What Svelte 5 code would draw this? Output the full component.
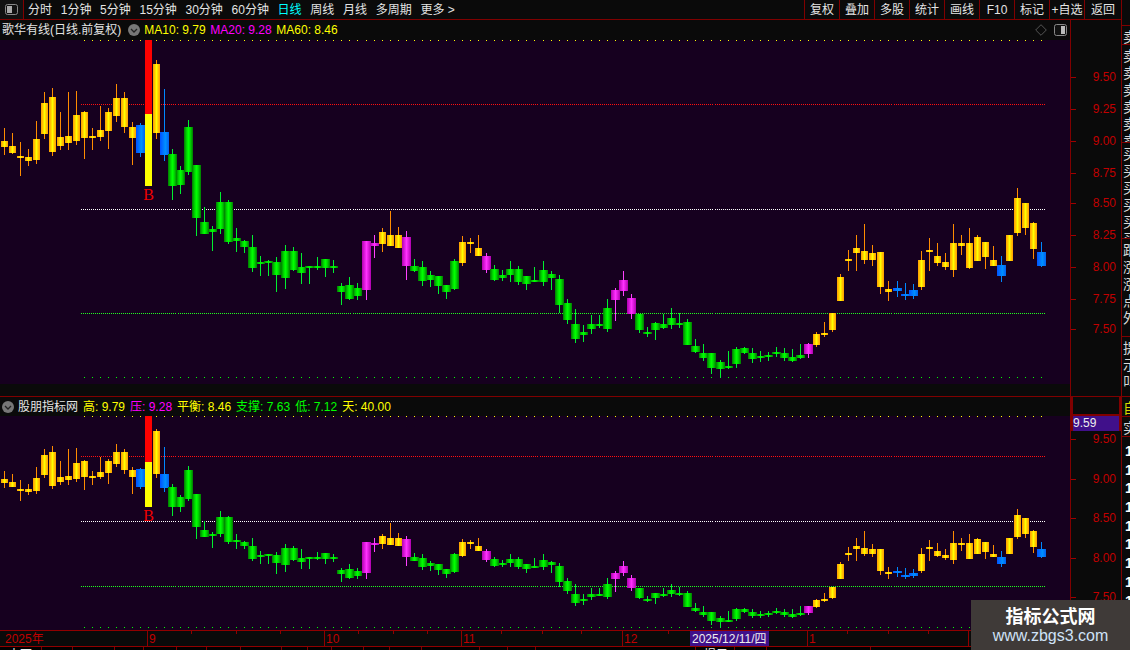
<script>
  const rows = `128,141,147,155 133,146,153,154 142,156,158,176 149,157,161,166 121,139,160,164 92,103,134,139 88,97,152,156 112,137,146,150 92,136,143,150 91,115,141,145 111,112,138,159 128,136,138,150 106,130,137,141 108,112,131,149 84,98,116,122 92,98,127,133 122,127,138,165 123,125,153,157 40,40,186,186 60,64,133,139 89,132,155,161 149,154,186,200 166,170,185,194 120,127,172,175 165,165,218,236 207,222,234,234 226,229,232,251 192,202,229,234 200,202,242,244 228,238,241,252 240,241,247,253 235,247,268,272 256,262,263,276 260,261,263,276 257,262,275,292 245,251,278,289 247,251,270,271 253,267,273,284 266,266,268,284 257,266,268,270 259,259,268,277 260,266,268,273 283,286,292,305 277,285,299,300 283,288,296,300 241,241,290,300 235,243,246,258 228,232,244,252 211,235,246,246 227,235,248,248 231,237,266,280 259,266,271,272 261,267,281,286 271,275,280,287 276,276,286,294 285,285,292,299 259,261,289,290 236,242,263,266 238,242,244,253 235,248,256,256 253,256,270,273 265,269,280,281 270,275,278,281 261,269,275,282 266,269,282,285 276,276,284,290 267,280,282,282 261,270,282,286 271,274,278,290 275,279,305,313 299,303,320,324 309,324,339,343 325,332,335,342 315,324,329,334 315,324,325,328 299,308,329,332 288,290,300,321 271,280,291,296 294,298,314,319 314,314,330,333 327,332,333,337 322,323,330,340 314,324,328,329 308,318,325,329 313,323,324,328 319,322,345,345 339,346,352,353 344,353,358,361 353,353,368,374 360,362,369,378 351,366,367,369 347,349,364,368 347,348,353,354 348,353,359,363 351,356,357,362 352,355,357,361 347,352,354,357 348,353,358,361 349,357,361,362 344,355,358,359 343,344,354,358 332,334,345,347 322,333,335,337 313,313,330,332 274,277,301,301 250,259,261,271 235,248,253,271 224,251,260,264 245,253,260,266 252,252,287,294 281,289,292,301 281,288,291,297 283,294,296,300 284,290,296,299 251,260,287,290 238,250,252,271 243,256,263,266 253,262,267,270 224,243,270,277 235,243,246,255 228,243,268,269 235,237,261,261 242,242,257,269 246,260,266,266 256,265,276,282 235,235,261,261 188,198,233,236 203,203,228,235 222,223,249,259 242,252,266,267`
    .split(' ').map((r) => r.split(',').map(Number));

  function kind(i) {
    if (i <= 16 || i === 19 || (i >= 47 && i <= 49) || (i >= 57 && i <= 59) || (i >= 101 && i <= 110) || (i >= 114 && i <= 123) || (i >= 125 && i <= 128)) return 'y';
    if (i === 17 || i === 20 || (i >= 111 && i <= 113) || i === 124 || i === 129) return 'b';
    if (i === 45 || i === 46 || i === 50 || i === 60 || (i >= 76 && i <= 78) || i === 100) return 'm';
    return 'g';
  }
  function xOf(i) {
    const off = i < 35 ? 4 : i < 45 ? 5 : i < 67 ? 6 : i < 89 ? 7 : i < 111 ? 8 : 9;
    return 8 * i + off;
  }
  const wick = { y: '#ff8c00', g: '#00f030', b: '#0088ff', m: '#ff40ff' };
  const candles = rows.map((r, i) => ({ i, r, k: kind(i), x: xOf(i) })).filter((c) => c.i !== 18);
  const dots = rows.map((_, i) => xOf(i)).filter((x) => x >= 84);
  const segs = [[81, 176], [178, 351], [353, 538], [540, 714], [715, 892], [894, 1046]];

  const top = (y) => y;
  const low = (y) => Math.round(416 + (y - 40) * 0.626);

  const topTicks = [['9.50', 77], ['9.25', 109], ['9.00', 141], ['8.75', 173], ['8.50', 203], ['8.25', 235], ['8.00', 267], ['7.75', 299], ['7.50', 329]];
  const lowTicks = [['9.50', 9], ['9.00', 49], ['8.50', 88], ['8.00', 128], ['7.50', 167]];

  const periods = ['分时', '1分钟', '5分钟', '15分钟', '30分钟', '60分钟', '日线', '周线', '月线', '多周期', '更多 >'];
  const tools = ['复权', '叠加', '多股', '统计', '画线', 'F10', '标记', '+自选', '返回'];

  const majors = [[147, '9'], [324, '10'], [461, '11'], [622, '12'], [807, '1'], [968, '']];
  const minors = [191, 236, 280, 358, 393, 427, 501, 542, 581, 668, 847, 888, 928];

  const cells = [42, 31, 42, 29, 33, 30, 34, 41, 26, 24, 32, 26, 32, 58, 28, 28, 160, 39, 32, 104];
  const sides = [
    { h: 19, t: '卖', c: '' },
    { h: 98, t: '卖卖卖卖卖卖', c: '' },
    { h: 96, t: '买买买买买买', c: '' },
    { h: 98, t: '跟涨涨点外', c: '' },
    { h: 60, t: '提示叫', c: '' },
    { h: 20, t: '自', c: 'gold' },
    { h: 20, t: '实', c: '' }
  ];
  const ones = Array.from({ length: 11 });
</script>

{#snippet chart(map, vb, h, lines)}
  <svg class="chart" width="1070" height={h} viewBox={vb} shape-rendering="crispEdges">
    {#each lines as l}
      {#each segs as s}
        <line x1={s[0]} x2={s[1]} y1={l.y + 0.5} y2={l.y + 0.5} stroke={l.c} stroke-dasharray="1 1" />
      {/each}
    {/each}
    {#each dots as x}
      <rect {x} y={map(40)} width="1" height="1" fill="#ffff00" />
      <rect {x} y={map(377)} width="1" height="1" fill="#00ff00" />
    {/each}
    {#each candles as c}
      <rect x={c.x} y={map(c.r[0])} width="1" height={Math.max(map(c.r[3]) - map(c.r[0]), 1)} fill={wick[c.k]} />
      <rect
        x={c.k === 'y' ? c.x - 3 : c.x - 4}
        y={map(c.r[1])}
        width={c.k === 'y' ? 7 : 9}
        height={Math.max(map(c.r[2]) - map(c.r[1]), 2)}
        fill="url(#g-{c.k})"
      />
    {/each}
    <rect x="145" y={map(40)} width="7" height={map(114) - map(40)} fill="#ff0000" />
    <rect x="145" y={map(114)} width="7" height={map(186) - map(114)} fill="#ffff00" />
    <text x="148.5" y={map(186) + 14} class="sig" text-anchor="middle">B</text>
  </svg>
{/snippet}

<div class="screen">
  <svg class="defs" width="0" height="0" aria-hidden="true">
    <defs>
      <linearGradient id="g-y"><stop offset="0" stop-color="#ff9a00" /><stop offset=".3" stop-color="#ffd000" /><stop offset=".5" stop-color="#ffff00" /><stop offset=".7" stop-color="#ffd000" /><stop offset="1" stop-color="#ff9a00" /></linearGradient>
      <linearGradient id="g-g"><stop offset="0" stop-color="#007a00" /><stop offset=".33" stop-color="#00e000" /><stop offset=".5" stop-color="#00ff00" /><stop offset=".67" stop-color="#00e000" /><stop offset="1" stop-color="#007a00" /></linearGradient>
      <linearGradient id="g-b"><stop offset="0" stop-color="#0050ff" /><stop offset=".6" stop-color="#0090ff" /><stop offset="1" stop-color="#0060f0" /></linearGradient>
      <linearGradient id="g-m"><stop offset="0" stop-color="#b000b0" /><stop offset=".5" stop-color="#ff30ff" /><stop offset="1" stop-color="#b000b0" /></linearGradient>
    </defs>
  </svg>

  <div class="main">
    <header class="toolbar">
      <div class="layout-btn">
        <svg width="13" height="11" viewBox="0 0 13 11"><rect x=".5" y=".5" width="12" height="10" rx="2" fill="#111" stroke="#888" /><rect x="2" y="2" width="5" height="7" fill="#aaa" /></svg>
      </div>
      <nav class="periods">
        {#each periods as p}
          <span class:on={p === '日线'}>{p}</span>
        {/each}
      </nav>
      <div class="tools">
        {#each tools as t}<span>{t}</span>{/each}
      </div>
    </header>

    <section class="pane pane-a">
      <div class="area">
        <div class="title">
          <span class="name">歌华有线(日线.前复权)</span>
          <svg class="chev" width="12" height="12" viewBox="0 0 12 12"><circle cx="6" cy="6" r="6" fill="#777" /><path d="M3 5l3 3 3-3" fill="none" stroke="#222" stroke-width="1.3" /></svg>
          <span class="val y ma">MA10: 9.79</span>
          <span class="val m ma">MA20: 9.28</span>
          <span class="val y ma">MA60: 8.46</span>
          <span class="end">
            <svg width="12" height="12" viewBox="0 0 12 12"><path d="M6 .7L11.3 6 6 11.3.7 6z" fill="none" stroke="#555" /></svg>
            <svg width="13" height="12" viewBox="0 0 13 12"><rect x=".5" y=".5" width="12" height="11" rx="2" fill="#111" stroke="#888" /><rect x="7" y="2" width="4" height="8" fill="#bbb" /></svg>
          </span>
        </div>
        {@render chart(top, '0 40 1070 344', 344, [{ y: 104, c: '#ff1010' }, { y: 209, c: '#ffffff' }, { y: 313, c: '#20ff20' }])}
      </div>
      <svg class="axis" width="50" height="376" viewBox="0 0 50 376" shape-rendering="crispEdges">
        {#each topTicks as t}
          <rect x="0" y={t[1] - 20} width="5" height="1" fill="#a00000" />
          <text x="45" y={t[1] - 16} text-anchor="end">{t[0]}</text>
        {/each}
      </svg>
    </section>

    <section class="pane pane-b">
      <div class="area">
        <div class="title title-b">
          <svg class="chev-b" width="12" height="12" viewBox="0 0 12 12"><circle cx="6" cy="6" r="6" fill="#777" /><path d="M3 5l3 3 3-3" fill="none" stroke="#222" stroke-width="1.3" /></svg>
          <span class="name">股朋指标网</span>
          <span class="val y pair">高: 9.79</span>
          <span class="val m pair">压: 9.28</span>
          <span class="val y pair">平衡: 8.46</span>
          <span class="val g pair">支撑: 7.63</span>
          <span class="val g pair">低: 7.12</span>
          <span class="val y pair">天: 40.00</span>
        </div>
        {@render chart(low, '0 416 1070 214', 214, [{ y: 456, c: '#ff1010' }, { y: 521, c: '#ffffff' }, { y: 586, c: '#20ff20' }])}
      </div>
      <div class="axis-b">
        <div class="cur-top"></div>
        <div class="cur">9.59</div>
        <svg width="50" height="198" viewBox="0 0 50 198" shape-rendering="crispEdges">
          {#each lowTicks as t}
            <rect x="0" y={t[1] - 1} width="5" height="1" fill="#a00000" />
            <text x="45" y={t[1] + 3} text-anchor="end">{t[0]}</text>
          {/each}
        </svg>
      </div>
    </section>

    <svg class="timeline" width="1121" height="15" viewBox="0 0 1121 15" shape-rendering="crispEdges">
      <text x="5" y="12" class="yr">2025年</text>
      {#each majors as m}
        <rect x={m[0]} y="0" width="1" height="15" fill="#900000" />
        <text x={m[0] + 2} y="12">{m[1]}</text>
      {/each}
      {#each minors as x}
        <rect {x} y="0" width="1" height="3" fill="#900000" />
      {/each}
      <rect x="690" y="0" width="79" height="15" fill="#40108a" />
      <text x="692" y="12" class="date">2025/12/11/四</text>
    </svg>

    <footer class="cells">
      {#each cells as w, i}
        <span class="cell" style="width:{w}px">{i === 0 ? '申万' : ''}{i === 17 ? '提示' : ''}</span>
      {/each}
    </footer>
  </div>

  <aside class="side">
    <div class="side-gap"></div>
    {#each sides as s}
      <div class="seg {s.c}" style="height:{s.h}px"><span>{s.t}</span></div>
    {/each}
    <div class="ones">
      {#each ones as _}<b>1</b>{/each}
    </div>
  </aside>

  <div class="mark">
    <strong>指标公式网</strong>
    <span>www.zbgs3.com</span>
  </div>
</div>

<style>
  :global(body) { margin: 0; background: #0a0a0a; }
  .screen {
    position: relative;
    display: flex;
    width: 1130px;
    height: 650px;
    overflow: hidden;
    background: #0a0a0a;
    color: #e4e4e4;
    font: 12px/1 "Liberation Sans", "Noto Sans CJK SC", sans-serif;
  }
  .defs { position: absolute; }
  .main {
    display: flex;
    flex-direction: column;
    width: 1121px;
    flex: none;
    border-right: 1px solid #800000;
  }
  .toolbar {
    display: flex;
    align-items: stretch;
    height: 19px;
    flex: none;
    border-bottom: 1px solid #800000;
  }
  .layout-btn {
    display: flex;
    align-items: center;
    justify-content: center;
    width: 23px;
    border-right: 1px solid #800000;
    background: #111;
  }
  .periods { display: flex; align-items: center; gap: 8.7px; margin-left: 4px; }
  .periods .on { color: #00ffff; }
  .tools { display: flex; margin-left: auto; }
  .tools span {
    display: flex;
    align-items: center;
    justify-content: center;
    width: 34px;
    border-left: 1px solid #800000;
    white-space: nowrap;
  }
  .tools span:last-child { width: 36px; }
  .pane { display: flex; flex: none; }
  .pane-a { height: 377px; border-bottom: 1px solid #800000; box-sizing: border-box; }
  .pane-b { height: 233px; }
  .area { width: 1070px; flex: none; border-right: 1px solid #800000; }
  .title {
    display: flex;
    align-items: center;
    height: 20px;
    white-space: nowrap;
  }
  .title .name { margin-left: 2px; }
  .chev { margin-left: 7px; }
  .val.y { color: #ffff00; }
  .val.m { color: #ff00ff; }
  .val.g { color: #00ff00; }
  .ma { margin-left: 4px; width: 62px; }
  .end { display: flex; gap: 7px; margin-left: auto; margin-right: 3px; }
  .chart { display: block; background: #16001f; }
  .sig { fill: #f00000; font-size: 16px; font-family: "Liberation Serif", serif; }
  .axis { display: block; flex: none; }
  .axis text, .axis-b text, .timeline text {
    fill: #c00000;
    font: 12px "Liberation Sans", "Noto Sans CJK SC", sans-serif;
  }
  .title-b { height: 19px; }
  .chev-b { margin-left: 2px; }
  .title-b .name { margin-left: 4px; width: 61px; }
  .pair { margin-left: 4px; }
  .pair + .pair { margin-left: 5px; }
  .axis-b { width: 50px; flex: none; }
  .axis-b svg { display: block; }
  .cur-top {
    height: 19px;
    border: 2px solid #800000;
    border-width: 0 2px 2px;
    box-sizing: border-box;
  }
  .cur {
    height: 15px;
    line-height: 15px;
    background: #40108a;
    color: #eee;
    border: solid #800000;
    border-width: 0 2px;
    box-sizing: border-box;
  }
  .timeline {
    display: block;
    flex: none;
    border-top: 1px solid #900000;
    border-bottom: 1px solid #900000;
    box-sizing: content-box;
  }
  .timeline .date { fill: #eee; }
  .cells { display: flex; height: 3px; overflow: hidden; background: #000; }
  .cell {
    display: block;
    flex: none;
    box-sizing: border-box;
    border-right: 1px solid #800000;
    padding: 1px 0 0 8px;
    line-height: 14px;
    color: #eee;
    white-space: nowrap;
  }
  .side { flex: 1; display: flex; flex-direction: column; overflow: hidden; min-width: 0; }
  .side-gap { height: 26px; flex: none; border-bottom: 1px solid #800000; box-sizing: border-box; }
  .seg {
    flex: none;
    box-sizing: border-box;
    overflow: hidden;
    border-bottom: 1px solid #800000;
    padding: 3px 0 0 1px;
  }
  .seg span {
    display: block;
    width: 14px;
    font-size: 14px;
    line-height: 17px;
    color: #d8d8d8;
  }
  .seg.gold span { color: #d8d800; }
  .ones { display: flex; flex-direction: column; gap: 4.7px; padding: 7px 0 0 3px; }
  .ones b { font-size: 14px; color: #fff; line-height: 14px; }
  .mark {
    position: absolute;
    left: 971px;
    top: 600px;
    width: 159px;
    height: 50px;
    display: flex;
    flex-direction: column;
    align-items: center;
    background: #3f3a38;
  }
  .mark strong { margin-top: 7px; font-size: 18px; line-height: 20px; color: #fff; }
  .mark span { font-size: 16px; line-height: 18px; color: #cfe2f7; }
</style>
